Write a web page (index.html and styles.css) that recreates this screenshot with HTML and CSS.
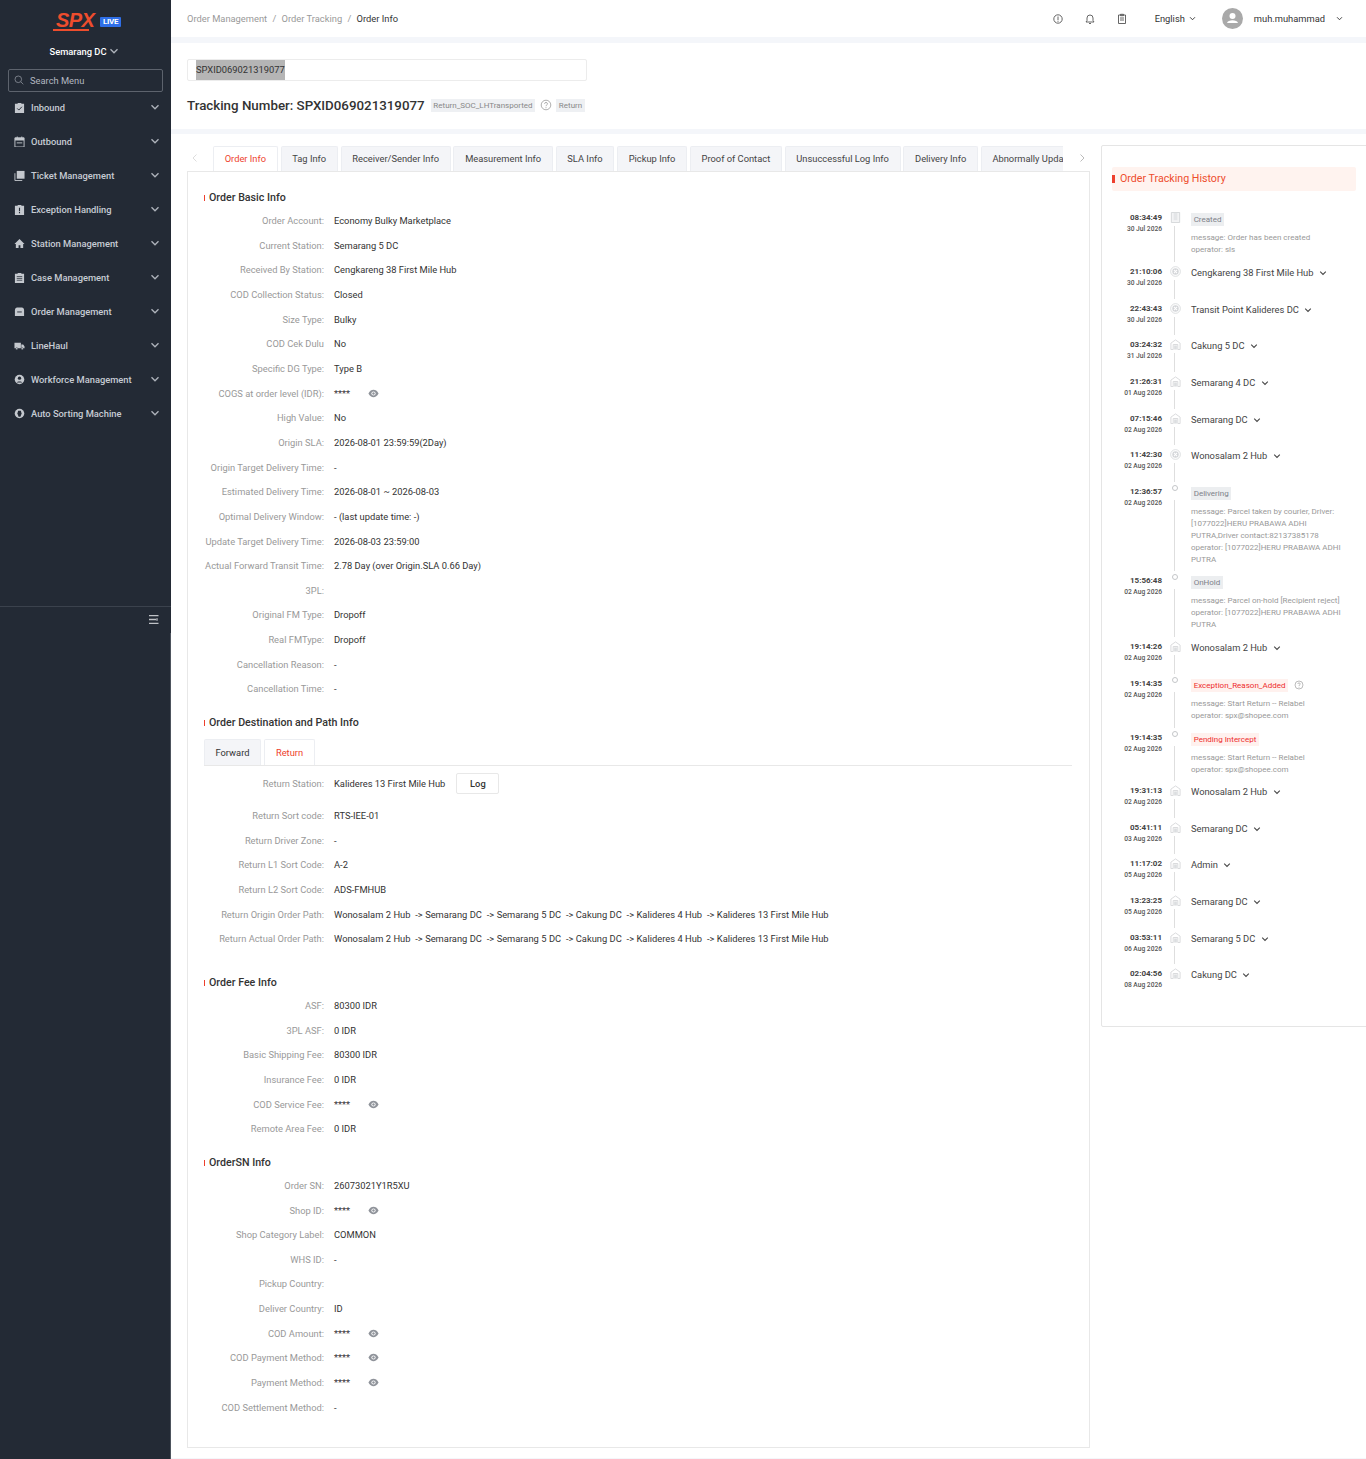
FILE: index.html
```html
<!DOCTYPE html>
<html lang="en">
<head>
<meta charset="utf-8">
<title>Order Info</title>
<link rel="stylesheet" href="styles.css">
</head>
<body>
<svg class="defs" width="0" height="0" aria-hidden="true">
  <symbol id="chev" viewBox="0 0 10 10"><path d="M1.500 3.200 5 6.800l3.500-3.600" fill="none" stroke="currentColor" stroke-width="1.300"/></symbol>
  <symbol id="eye" viewBox="0 0 12 12"><path d="M.5 6C2 3.200 3.900 2 6 2s4 1.200 5.500 4C10 8.800 8.100 10 6 10S2 8.800.5 6z" fill="#8f939a"/><circle cx="6" cy="6" r="2.300" fill="#fff"/><circle cx="6" cy="6" r="1.300" fill="#8f939a"/></symbol>
  <symbol id="hub" viewBox="0 0 12 12"><path d="M1 11.500V4.500L6 1l5 3.500v7H8.500V6h-5v5.500z" fill="none" stroke="#d6d8da" stroke-width="1"/><path d="M4.500 7h3v4.500h-3z" fill="#dcdee0"/></symbol>
  <symbol id="x" viewBox="0 0 12 12"><circle cx="6" cy="6" r="5.300" fill="none" stroke="#d6d8da" stroke-width=".9"/><circle cx="6" cy="6" r="3.500" fill="#d3d5d8"/><path d="M4.300 4.300l3.400 3.400m0-3.400-3.400 3.400" stroke="#fff" stroke-width="1.100"/></symbol>
  <symbol id="doc" viewBox="0 0 10 12"><path d="M.5.500h9v11h-9z" fill="#f3f4f5" stroke="#d3d5d8"/><path d="M3 1h4v8H3z" fill="#e4e6e8"/></symbol>
  <symbol id="help" viewBox="0 0 12 12"><circle cx="6" cy="6" r="4.800" fill="none" stroke="#9a9a9a" stroke-width=".8"/><path d="M4.500 4.800C4.500 3 7.500 3 7.500 4.800 7.500 6 6 5.800 6 7.200M6 8.200v1" fill="none" stroke="#9a9a9a" stroke-width=".8"/></symbol>
</svg>

<div class="app">
  <aside class="sidebar">
    <div class="logo-row">
      <div class="logo"><span class="logo-text">SPX</span><span class="logo-bar"></span></div>
      <span class="live">LIVE</span>
    </div>
    <div class="station">Semarang DC <svg class="ic-10"><use href="#chev"/></svg></div>
    <div class="search">
      <svg class="ic-10" viewBox="0 0 10 10"><circle cx="4.300" cy="4.300" r="3.300" fill="none" stroke="#8b919a" stroke-width=".8"/><path d="m6.800 6.800 2.500 2.500" stroke="#8b919a" stroke-width=".8"/></svg>
      <span>Search Menu</span>
    </div>
    <nav class="menu">
      <div class="menu-item"><svg class="m-ic" viewBox="0 0 12 12"><path d="M1 2h3V1h4v1h3v10H1z" fill="#c4c8ce"/><path d="m3.500 7 1.800 1.800 3.300-3.600" fill="none" stroke="#232a35" stroke-width="1"/></svg><span>Inbound</span><svg class="m-ch"><use href="#chev"/></svg></div>
      <div class="menu-item"><svg class="m-ic" viewBox="0 0 12 12"><path d="M1 2h10v10H1z" fill="none" stroke="#c4c8ce"/><path d="M1 2h10v3H1zM3 .5h1V2H3zM8 .5h1V2H8z" fill="#c4c8ce"/><path d="M3 7.500h6" stroke="#c4c8ce"/></svg><span>Outbound</span><svg class="m-ch"><use href="#chev"/></svg></div>
      <div class="menu-item"><svg class="m-ic" viewBox="0 0 12 12"><path d="M3 1h8.500v8.500H3z" fill="#c4c8ce"/><path d="M1 3.500v8h8" fill="none" stroke="#c4c8ce"/></svg><span>Ticket Management</span><svg class="m-ch"><use href="#chev"/></svg></div>
      <div class="menu-item"><svg class="m-ic" viewBox="0 0 12 12"><path d="M1 2h3V1h4v1h3v10H1z" fill="#c4c8ce"/><path d="M6 4v3.500M6 8.500V10" stroke="#232a35" stroke-width="1.200"/></svg><span>Exception Handling</span><svg class="m-ch"><use href="#chev"/></svg></div>
      <div class="menu-item"><svg class="m-ic" viewBox="0 0 12 12"><path d="M6 1 .5 6.500H2V11h3V8h2v3h3V6.500h1.500z" fill="#c4c8ce"/></svg><span>Station Management</span><svg class="m-ch"><use href="#chev"/></svg></div>
      <div class="menu-item"><svg class="m-ic" viewBox="0 0 12 12"><path d="M1 2h3V1h4v1h3v10H1z" fill="#c4c8ce"/><path d="M3 5h6M3 7h6M3 9h6" stroke="#232a35" stroke-width=".8"/></svg><span>Case Management</span><svg class="m-ch"><use href="#chev"/></svg></div>
      <div class="menu-item"><svg class="m-ic" viewBox="0 0 12 12"><path d="M1 5c0-2.500 1-3.500 2.500-3.500h5C10 1.500 11 2.500 11 5v6H1z" fill="#c4c8ce"/><path d="M3.500 6.500h5" stroke="#232a35"/></svg><span>Order Management</span><svg class="m-ch"><use href="#chev"/></svg></div>
      <div class="menu-item"><svg class="m-ic" viewBox="0 0 12 12"><path d="M.5 3h7v6H.5zM8 5h2l1.500 2v2H8z" fill="#c4c8ce"/><circle cx="3" cy="9.500" r="1.200" fill="#c4c8ce" stroke="#232a35" stroke-width=".5"/><circle cx="9" cy="9.500" r="1.200" fill="#c4c8ce" stroke="#232a35" stroke-width=".5"/></svg><span>LineHaul</span><svg class="m-ch"><use href="#chev"/></svg></div>
      <div class="menu-item"><svg class="m-ic" viewBox="0 0 12 12"><circle cx="6" cy="6" r="5.200" fill="#c4c8ce"/><circle cx="6" cy="4.600" r="1.800" fill="#232a35"/><path d="M2.800 9.400C3.400 7.600 8.600 7.600 9.200 9.400z" fill="#232a35"/></svg><span>Workforce Management</span><svg class="m-ch"><use href="#chev"/></svg></div>
      <div class="menu-item"><svg class="m-ic" viewBox="0 0 12 12"><circle cx="6" cy="6" r="5.200" fill="#c4c8ce"/><path d="M4.500 3h3l.8 3-1.300 3.500H5L3.700 6z" fill="#232a35"/></svg><span>Auto Sorting Machine</span><svg class="m-ch"><use href="#chev"/></svg></div>
    </nav>
    <div class="side-foot">
      <svg class="foot-ic" viewBox="0 0 10 9"><path d="M0 .5h9.500M0 4.500h7M0 8.500h9.500" stroke="#bfc2c7" stroke-width="1.300"/><path d="M8 3.300v2.400" stroke="#bfc2c7" stroke-width="1.300"/></svg>
    </div>
  </aside>

  <main class="main">
    <header class="topbar">
      <div class="crumbs"><span>Order Management</span><i>/</i><span>Order Tracking</span><i>/</i><b>Order Info</b></div>
      <div class="top-right">
        <svg class="t-ic" viewBox="0 0 12 12"><circle cx="6" cy="6" r="4.200" fill="none" stroke="#555" stroke-width=".9"/><path d="M6 3.500v3.800M6 8v.8" stroke="#555" stroke-width=".9"/></svg>
        <svg class="t-ic" viewBox="0 0 12 12"><path d="M2 9h8L9 7.500V5a3 3 0 0 0-6 0v2.500zM5 10.500h2" fill="none" stroke="#555" stroke-width=".9"/></svg>
        <svg class="t-ic t-last" viewBox="0 0 12 12"><path d="M2.500 2h7v8.500h-7zM4.500 1.300h3v1.400h-3zM4 5h4M4 7h4" fill="none" stroke="#555" stroke-width=".9"/></svg>
        <span class="lang">English <svg class="ic-7"><use href="#chev"/></svg></span>
        <svg class="avatar" viewBox="0 0 21 21"><circle cx="10.500" cy="10.500" r="10.500" fill="#a9a9a9"/><circle cx="10.500" cy="8" r="3" fill="#fff"/><path d="M5 15c.8-3.600 10.200-3.600 11 0z" fill="#fff"/></svg>
        <span class="user">muh.muhammad</span>
        <svg class="ic-7 user-ch"><use href="#chev"/></svg>
      </div>
    </header>

    <section class="search-panel">
      <div class="tn-input"><span class="selected">SPXID069021319077</span></div>
      <div class="tn-row">
        <h1>Tracking Number: SPXID069021319077</h1>
        <span class="tag">Return_SOC_LHTransported</span>
        <svg class="help"><use href="#help"/></svg>
        <span class="tag">Return</span>
      </div>
    </section>

    <div class="content">
      <div class="left">
        <div class="tabs">
          <svg class="tab-arrow off" viewBox="0 0 8 10"><path d="M5.500 1.500 2 5l3.500 3.500" fill="none" stroke="currentColor"/></svg>
          <div class="tab-list">
            <span class="tab active">Order Info</span>
            <span class="tab">Tag Info</span>
            <span class="tab">Receiver/Sender Info</span>
            <span class="tab">Measurement Info</span>
            <span class="tab">SLA Info</span>
            <span class="tab">Pickup Info</span>
            <span class="tab">Proof of Contact</span>
            <span class="tab">Unsuccessful Log Info</span>
            <span class="tab">Delivery Info</span>
            <span class="tab">Abnormally Update</span>
          </div>
          <svg class="tab-arrow" viewBox="0 0 8 10"><path d="M2.500 1.500 6 5 2.500 8.500" fill="none" stroke="currentColor"/></svg>
        </div>

        <div class="card">
          <h2 class="sec first">Order Basic Info</h2>
          <div class="row"><label>Order Account:</label><span>Economy Bulky Marketplace</span></div>
          <div class="row"><label>Current Station:</label><span>Semarang 5 DC</span></div>
          <div class="row"><label>Received By Station:</label><span>Cengkareng 38 First Mile Hub</span></div>
          <div class="row"><label>COD Collection Status:</label><span>Closed</span></div>
          <div class="row"><label>Size Type:</label><span>Bulky</span></div>
          <div class="row"><label>COD Cek Dulu</label><span>No</span></div>
          <div class="row"><label>Specific DG Type:</label><span>Type B</span></div>
          <div class="row"><label>COGS at order level (IDR):</label><span class="mask">****</span><svg class="eye"><use href="#eye"/></svg></div>
          <div class="row"><label>High Value:</label><span>No</span></div>
          <div class="row"><label>Origin SLA:</label><span>2026-08-01 23:59:59(2Day)</span></div>
          <div class="row"><label>Origin Target Delivery Time:</label><span>-</span></div>
          <div class="row"><label>Estimated Delivery Time:</label><span>2026-08-01 ~ 2026-08-03</span></div>
          <div class="row"><label>Optimal Delivery Window:</label><span>- (last update time: -)</span></div>
          <div class="row"><label>Update Target Delivery Time:</label><span>2026-08-03 23:59:00</span></div>
          <div class="row"><label>Actual Forward Transit Time:</label><span>2.78 Day (over Origin.SLA 0.66 Day)</span></div>
          <div class="row"><label>3PL:</label><span></span></div>
          <div class="row"><label>Original FM Type:</label><span>Dropoff</span></div>
          <div class="row"><label>Real FMType:</label><span>Dropoff</span></div>
          <div class="row"><label>Cancellation Reason:</label><span>-</span></div>
          <div class="row"><label>Cancellation Time:</label><span>-</span></div>

          <h2 class="sec">Order Destination and Path Info</h2>
          <div class="subtabs"><span class="subtab">Forward</span><span class="subtab active">Return</span></div>
          <div class="row row-log"><label>Return Station:</label><span>Kalideres 13 First Mile Hub</span><span class="log">Log</span></div>
          <div class="row"><label>Return Sort code:</label><span>RTS-IEE-01</span></div>
          <div class="row"><label>Return Driver Zone:</label><span>-</span></div>
          <div class="row"><label>Return L1 Sort Code:</label><span>A-2</span></div>
          <div class="row"><label>Return L2 Sort Code:</label><span>ADS-FMHUB</span></div>
          <div class="row"><label>Return Origin Order Path:</label><span class="path">Wonosalam 2 Hub &nbsp;-&gt; Semarang DC &nbsp;-&gt; Semarang 5 DC &nbsp;-&gt; Cakung DC &nbsp;-&gt; Kalideres 4 Hub &nbsp;-&gt; Kalideres 13 First Mile Hub</span></div>
          <div class="row"><label>Return Actual Order Path:</label><span class="path">Wonosalam 2 Hub &nbsp;-&gt; Semarang DC &nbsp;-&gt; Semarang 5 DC &nbsp;-&gt; Cakung DC &nbsp;-&gt; Kalideres 4 Hub &nbsp;-&gt; Kalideres 13 First Mile Hub</span></div>

          <h2 class="sec wide">Order Fee Info</h2>
          <div class="row"><label>ASF:</label><span>80300 IDR</span></div>
          <div class="row"><label>3PL ASF:</label><span>0 IDR</span></div>
          <div class="row"><label>Basic Shipping Fee:</label><span>80300 IDR</span></div>
          <div class="row"><label>Insurance Fee:</label><span>0 IDR</span></div>
          <div class="row"><label>COD Service Fee:</label><span class="mask">****</span><svg class="eye"><use href="#eye"/></svg></div>
          <div class="row"><label>Remote Area Fee:</label><span>0 IDR</span></div>

          <h2 class="sec">OrderSN Info</h2>
          <div class="row"><label>Order SN:</label><span>26073021Y1R5XU</span></div>
          <div class="row"><label>Shop ID:</label><span class="mask">****</span><svg class="eye"><use href="#eye"/></svg></div>
          <div class="row"><label>Shop Category Label:</label><span>COMMON</span></div>
          <div class="row"><label>WHS ID:</label><span>-</span></div>
          <div class="row"><label>Pickup Country:</label><span></span></div>
          <div class="row"><label>Deliver Country:</label><span>ID</span></div>
          <div class="row"><label>COD Amount:</label><span class="mask">****</span><svg class="eye"><use href="#eye"/></svg></div>
          <div class="row"><label>COD Payment Method:</label><span class="mask">****</span><svg class="eye"><use href="#eye"/></svg></div>
          <div class="row"><label>Payment Method:</label><span class="mask">****</span><svg class="eye"><use href="#eye"/></svg></div>
          <div class="row"><label>COD Settlement Method:</label><span>-</span></div>
        </div>
      </div>

      <aside class="history">
        <div class="hist-title">Order Tracking History</div>
        <div class="tl">
          <div class="ti h54"><div class="when"><b>08:34:49</b><small>30 Jul 2026</small></div><div class="node"><svg class="n-ic"><use href="#doc"/></svg></div><div class="what"><span class="st">Created</span><p>message: Order has been created<br>operator: sls</p></div></div>
          <div class="ti"><div class="when"><b>21:10:06</b><small>30 Jul 2026</small></div><div class="node"><svg class="n-ic"><use href="#x"/></svg></div><div class="what"><div class="place">Cengkareng 38 First Mile Hub <svg class="ic-8"><use href="#chev"/></svg></div></div></div>
          <div class="ti"><div class="when"><b>22:43:43</b><small>30 Jul 2026</small></div><div class="node"><svg class="n-ic"><use href="#x"/></svg></div><div class="what"><div class="place">Transit Point Kalideres DC <svg class="ic-8"><use href="#chev"/></svg></div></div></div>
          <div class="ti"><div class="when"><b>03:24:32</b><small>31 Jul 2026</small></div><div class="node"><svg class="n-ic"><use href="#hub"/></svg></div><div class="what"><div class="place">Cakung 5 DC <svg class="ic-8"><use href="#chev"/></svg></div></div></div>
          <div class="ti"><div class="when"><b>21:26:31</b><small>01 Aug 2026</small></div><div class="node"><svg class="n-ic"><use href="#hub"/></svg></div><div class="what"><div class="place">Semarang 4 DC <svg class="ic-8"><use href="#chev"/></svg></div></div></div>
          <div class="ti"><div class="when"><b>07:15:46</b><small>02 Aug 2026</small></div><div class="node"><svg class="n-ic"><use href="#hub"/></svg></div><div class="what"><div class="place">Semarang DC <svg class="ic-8"><use href="#chev"/></svg></div></div></div>
          <div class="ti"><div class="when"><b>11:42:30</b><small>02 Aug 2026</small></div><div class="node"><svg class="n-ic"><use href="#x"/></svg></div><div class="what"><div class="place">Wonosalam 2 Hub <svg class="ic-8"><use href="#chev"/></svg></div></div></div>
          <div class="ti h89"><div class="when"><b>12:36:57</b><small>02 Aug 2026</small></div><div class="node"><span class="dot"></span></div><div class="what"><span class="st">Delivering</span><p>message: Parcel taken by courier, Driver:<br>[1077022]HERU PRABAWA ADHI<br>PUTRA,Driver contact:82137385178<br>operator: [1077022]HERU PRABAWA ADHI<br>PUTRA</p></div></div>
          <div class="ti h66"><div class="when"><b>15:56:48</b><small>02 Aug 2026</small></div><div class="node"><span class="dot"></span></div><div class="what"><span class="st">OnHold</span><p>message: Parcel on-hold [Recipient reject]<br>operator: [1077022]HERU PRABAWA ADHI<br>PUTRA</p></div></div>
          <div class="ti"><div class="when"><b>19:14:26</b><small>02 Aug 2026</small></div><div class="node"><svg class="n-ic"><use href="#hub"/></svg></div><div class="what"><div class="place">Wonosalam 2 Hub <svg class="ic-8"><use href="#chev"/></svg></div></div></div>
          <div class="ti h54"><div class="when"><b>19:14:35</b><small>02 Aug 2026</small></div><div class="node"><span class="dot"></span></div><div class="what"><span class="st red">Exception_Reason_Added</span><svg class="help tl-help"><use href="#help"/></svg><p>message: Start Return -- Relabel<br>operator: spx@shopee.com</p></div></div>
          <div class="ti h53"><div class="when"><b>19:14:35</b><small>02 Aug 2026</small></div><div class="node"><span class="dot"></span></div><div class="what"><span class="st red">Pending Intercept</span><p>message: Start Return -- Relabel<br>operator: spx@shopee.com</p></div></div>
          <div class="ti"><div class="when"><b>19:31:13</b><small>02 Aug 2026</small></div><div class="node"><svg class="n-ic"><use href="#hub"/></svg></div><div class="what"><div class="place">Wonosalam 2 Hub <svg class="ic-8"><use href="#chev"/></svg></div></div></div>
          <div class="ti"><div class="when"><b>05:41:11</b><small>03 Aug 2026</small></div><div class="node"><svg class="n-ic"><use href="#hub"/></svg></div><div class="what"><div class="place">Semarang DC <svg class="ic-8"><use href="#chev"/></svg></div></div></div>
          <div class="ti"><div class="when"><b>11:17:02</b><small>05 Aug 2026</small></div><div class="node"><svg class="n-ic"><use href="#hub"/></svg></div><div class="what"><div class="place">Admin <svg class="ic-8"><use href="#chev"/></svg></div></div></div>
          <div class="ti"><div class="when"><b>13:23:25</b><small>05 Aug 2026</small></div><div class="node"><svg class="n-ic"><use href="#hub"/></svg></div><div class="what"><div class="place">Semarang DC <svg class="ic-8"><use href="#chev"/></svg></div></div></div>
          <div class="ti"><div class="when"><b>03:53:11</b><small>06 Aug 2026</small></div><div class="node"><svg class="n-ic"><use href="#hub"/></svg></div><div class="what"><div class="place">Semarang 5 DC <svg class="ic-8"><use href="#chev"/></svg></div></div></div>
          <div class="ti last"><div class="when"><b>02:04:56</b><small>08 Aug 2026</small></div><div class="node"><svg class="n-ic"><use href="#hub"/></svg></div><div class="what"><div class="place">Cakung DC <svg class="ic-8"><use href="#chev"/></svg></div></div></div>
        </div>
      </aside>
    </div>
  </main>
</div>
</body>
</html>
```
FILE: styles.css
```css
* { box-sizing: border-box; }
html, body { margin: 0; padding: 0; }
body { font-family: Roboto, "Liberation Sans", sans-serif; font-size: 9.330px; color: #333; background: #fff; height: 1459px; overflow: hidden; }
.defs { position: absolute; }
.app { display: flex; height: 1459px; }

/* sidebar */
.sidebar { width: 171px; flex: none; background: #232a35; color: #c7ccd4; display: flex; flex-direction: column; position: relative; }
.sidebar::after { content: ""; position: absolute; right: 0; top: 633px; bottom: 0; width: 1px; background: #4d535d; }
.logo-row { height: 36px; padding: 11px 0 0 56px; display: flex; align-items: flex-start; }
.logo { width: 38px; display: flex; flex-direction: column; align-items: flex-start; }
.logo-text { font: italic 700 20px/19px "Liberation Sans", sans-serif; color: #ee4d2d; letter-spacing: -.6px; }
.logo-bar { width: 36px; height: 2px; margin: -1px 0 0 -3px; background: #ee4d2d; }
.live { margin: 6px 0 0 6px; width: 21px; height: 10px; background: #2f6fe8; color: #fff; font-size: 8px; font-weight: 700; line-height: 10px; text-align: center; border-radius: 1px; letter-spacing: -.3px; }
.station { height: 30px; display: flex; align-items: center; justify-content: center; color: #fff; font-weight: 500; gap: 3px; padding-right: 2px; }
.station .ic-10 { color: #aeb3bb; }
.ic-10 { width: 10px; height: 10px; flex: none; }
.ic-7 { width: 7px; height: 7px; }
.ic-8 { width: 8px; height: 8px; margin-left: 3px; color: #444; vertical-align: -1px; }
.search { margin: 3px 8px 0; height: 23px; border: 1px solid #5d636d; border-radius: 2px; display: flex; align-items: center; padding: 0 0 1px 5px; gap: 6px; color: #b3b8c0; }
.menu { display: flex; flex-direction: column; margin-top: -1px; }
.menu-item { height: 34px; padding: 0 11px 0 14px; display: flex; align-items: center; font-weight: 500; position: relative; top: -1px; }
.m-ic { width: 11px; height: 11px; flex: none; margin-right: 6px; }
.menu-item span { flex: 1; }
.m-ch { width: 10px; height: 10px; color: #aeb3bb; }
.side-foot { margin-top: 175px; border-top: 1px solid #3b424d; height: 27px; padding: 8px 12px 0 0; display: flex; justify-content: flex-end; }
.foot-ic { width: 10px; height: 9px; }

/* main */
.main { flex: 1; min-width: 0; background: #f4f6fa; overflow: hidden; }
.topbar { height: 37px; background: #fff; padding: 0 23px 0 16px; display: flex; align-items: center; justify-content: space-between; }
.crumbs { color: #999; display: flex; gap: 5.300px; }
.crumbs i { font-style: normal; }
.crumbs b { font-weight: 400; color: #333; }
.top-right { display: flex; align-items: center; color: #333; }
.t-ic { width: 12px; height: 12px; margin-right: 20px; }
.t-last { margin-right: 27px; }
.lang { margin: 0 26px 0 0; display: flex; align-items: center; gap: 4px; }
.avatar { width: 21px; height: 21px; margin-right: 11px; }
.user { margin-right: 11px; }
.search-panel { margin-top: 6px; height: 86px; background: #fff; padding: 16px 16px 0; }
.tn-input { width: 400px; height: 22px; border: 1px solid #ececec; border-radius: 2px; padding-left: 8px; display: flex; }
.selected { background: #b5b5b5; line-height: 20px; height: 20px; }
.tn-row { margin-top: 14px; height: 20px; display: flex; align-items: center; }
.tn-row h1 { margin: 0 6px 0 0; font-size: 13.330px; font-weight: 500; color: #333; }
.tag { background: #eef0f3; color: #888; font-size: 8px; line-height: 13px; height: 13px; padding: 0 2.670px; }
.help { width: 12px; height: 12px; margin: 0 4px 0 5px; }
.content { margin-top: 5px; background: #fff; height: 1324px; padding: 12px 0 0 16px; display: flex; align-items: flex-start; }
.left { width: 903px; flex: none; }
.tabs { display: flex; align-items: flex-end; height: 25px; }
.tab-arrow { width: 8px; height: 10px; color: #bbb; margin-bottom: 8px; flex: none; }
.tab-arrow.off { color: #ddd; margin: 0 14px 8px 4px; }
.tab-list { width: 850px; overflow: hidden; display: flex; gap: 2.800px; flex: none; margin-right: 15px; }
.tab { flex: none; height: 25px; padding: 0 10.670px; background: #f4f5f8; border: 1px solid #eceef2; border-bottom: 0; border-radius: 2px 2px 0 0; line-height: 24px; color: #444; white-space: nowrap; }
.tab.active { background: #fff; color: #ee3f2d; }
.card { border: 1px solid #e8e8e8; height: 1277px; padding: 0 16px; }
.sec { margin: 13.600px 0 2.400px; font-size: 10.670px; font-weight: 500; line-height: 16px; color: #333; padding-left: 5px; position: relative; }
.sec::before { content: ""; position: absolute; left: 0; top: 5px; width: 1px; height: 6px; background: #ee3f2d; }
.sec.first { margin-top: 18px; }
.sec.wide { margin-top: 23.600px; }
.row { height: 24.650px; display: flex; align-items: center; color: #333; }
.row label { width: 120px; color: #999; margin-right: 10px; white-space: nowrap; display: flex; justify-content: flex-end; }
.path { word-spacing: .1px; }
.mask { width: 34px; }
.eye { width: 11px; height: 11px; }
.subtabs { display: flex; gap: 3px; border-bottom: 1px solid #e8e8e8; height: 27px; margin: 8.600px 1px 5px 0; }
.subtab { width: 57px; height: 26px; background: #f4f5f8; border: 1px solid #eceef2; border-bottom: 0; border-radius: 2px 2px 0 0; line-height: 26px; text-align: center; }
.subtab.active { width: 51px; background: #fff; color: #ee3f2d; }
.row-log { height: 24px; margin-bottom: 8px; }
.log { margin-left: 11px; width: 43px; height: 21px; border: 1px solid #e8e8e8; border-radius: 2px; line-height: 19px; text-align: center; font-weight: 500; }

/* history */
.history { margin: -1px 0 0 11px; width: 280px; flex: none; height: 882px; border: 1px solid #e5e5e5; border-radius: 2px 0 0 2px; padding: 21px 0 0 10px; }
.hist-title { width: 244px; height: 24px; background: #fff3ef; color: #ee4d2d; font-size: 10.670px; line-height: 24px; padding-left: 8px; border-radius: 2px; position: relative; }
.hist-title::before { content: ""; position: absolute; left: 0; top: 8px; width: 3px; height: 8px; background: #ee3f2d; }
.tl { margin-top: 19px; }
.ti { display: flex; height: 36.700px; }
.h54 { height: 54px; }
.h53 { height: 53px; }
.h66 { height: 66px; }
.h89 { height: 89px; }
.when { width: 50px; text-align: right; display: flex; flex-direction: column; flex: none; }
.when b { font-size: 8px; font-weight: 700; line-height: 10px; color: #444; margin-top: 3px; }
.when small { font-size: 6.670px; font-weight: 500; line-height: 9px; margin-top: 2px; color: #555; }
.node { width: 29px; flex: none; position: relative; display: flex; justify-content: center; padding: 2px 2px 0 0; }
.node::after { content: ""; position: absolute; left: 12px; top: 16px; bottom: 2px; width: 1px; background: #dedede; }
.ti.last .node::after { display: none; }
.dot { width: 6px; height: 6px; border: 1px solid #c4c6c9; border-radius: 50%; margin: -1px 0 0 -2px; }
.n-ic { width: 11px; height: 11px; }
.what { flex: 1; min-width: 0; padding-top: 3px; }
.place { font-size: 9.330px; line-height: 14px; color: #444; margin-top: -1px; }
.st { display: inline-block; background: #eceef0; color: #7d8189; font-size: 8px; line-height: 13px; height: 13px; padding: 0 2.670px; }
.st.red { background: #fff1ee; color: #ee2d2d; }
.tl-help { margin: 0 0 0 6px; vertical-align: -2px; width: 10px; height: 10px; }
.what p { margin: 6px 0 0; font-size: 8px; line-height: 12px; color: #999; white-space: nowrap; }
```
